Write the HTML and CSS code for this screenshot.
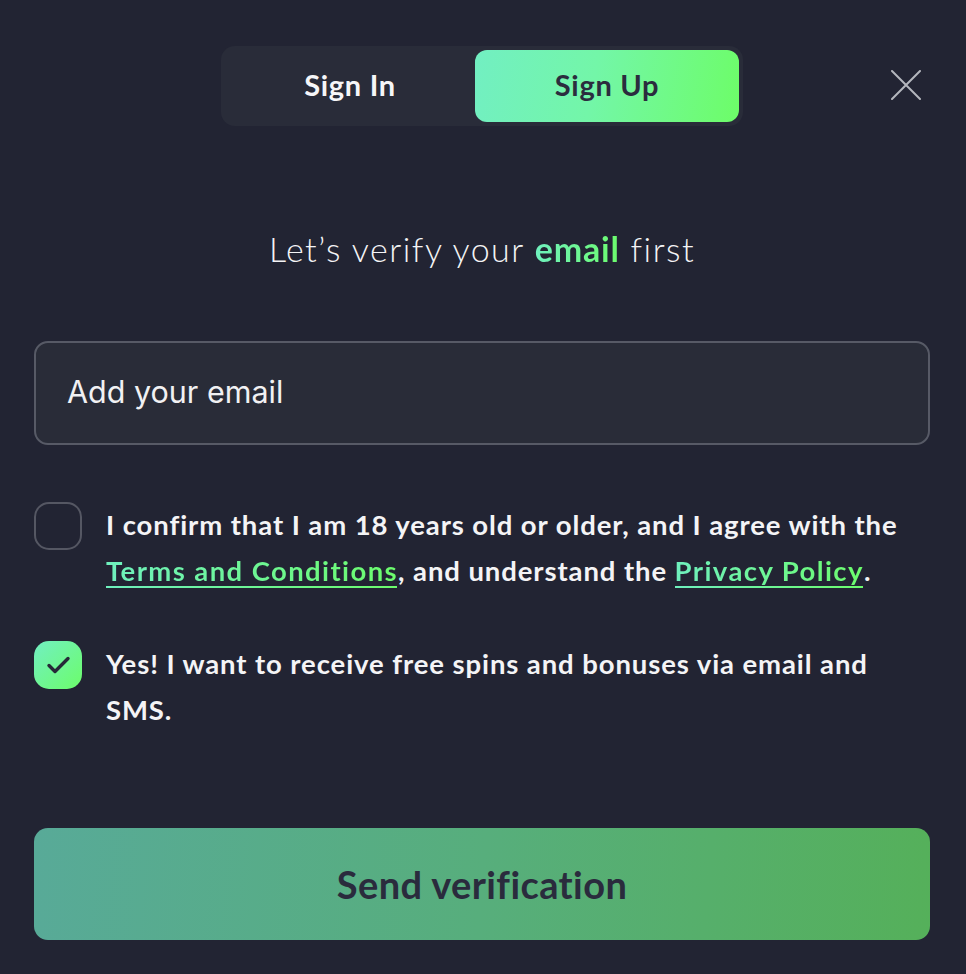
FILE: index.html
```html
<!DOCTYPE html>
<html lang="en">
<head>
<meta charset="utf-8">
<title>Sign Up</title>
<link rel="stylesheet" href="styles.css">
</head>
<body>
<main class="modal">
  <header class="header">
    <div class="tabs">
      <button class="tab tab-in">Sign In</button>
      <button class="tab tab-up">Sign Up</button>
    </div>
    <button class="close" aria-label="Close">
      <svg width="30" height="30" viewBox="0 0 30 30" fill="none" stroke="#b4b6bd" stroke-width="2" stroke-linecap="round"><path d="M1 1L29 29M29 1L1 29"/></svg>
    </button>
  </header>

  <h1 class="title">Let’s verify your <strong class="accent">email</strong> first</h1>

  <div class="field">
    <span class="placeholder">Add your email</span>
  </div>

  <div class="checks">
    <label class="check-row">
      <span class="box"></span>
      <span class="check-text">I confirm that I am 18 years old or older, and I agree with the <a class="link" href="#">Terms and Conditions</a>, and understand the <a class="link" href="#">Privacy Policy</a>.</span>
    </label>
    <label class="check-row">
      <span class="box box-on">
        <svg width="25" height="18" viewBox="0 0 25 18" fill="none" stroke="#262838" stroke-width="3.4" stroke-linecap="round" stroke-linejoin="round"><path d="M3 9.5L9 15.5L22 2.5"/></svg>
      </span>
      <span class="check-text">Yes! I want to receive free spins and bonuses via email and SMS.</span>
    </label>
  </div>

  <button class="submit">Send verification</button>
</main>
</body>
</html>
```

FILE: styles.css
```css
* { box-sizing: border-box; }
html, body { margin: 0; padding: 0; }
body {
  background: #222433;
  color: #f4f4f6;
  font-family: Lato, "Open Sans", sans-serif;
  width: 966px;
  height: 974px;
  overflow: hidden;
}
.modal {
  padding: 46px 36px 0 34px;
}
.header {
  display: grid;
  grid-template-columns: 1fr auto 1fr;
  align-items: center;
}
.tabs {
  grid-column: 2;
  display: flex;
  width: 522px;
  height: 80px;
  padding: 4px;
  background: #292c39;
  border-radius: 14px;
}
.tab {
  border: 0;
  background: transparent;
  font-family: Lato, sans-serif;
  font-weight: 700;
  font-size: 29px;
  letter-spacing: 0.7px;
  color: #f6f6f8;
  border-radius: 12px;
  cursor: pointer;
  padding: 0 0 3px;
}
.tab-in { width: 250px; }
.tab-up {
  width: 264px;
  color: #2b2c3e;
  background: linear-gradient(100deg, #72efc2 0%, #73f6a8 45%, #6dfd68 100%);
}
.close {
  grid-column: 3;
  justify-self: end;
  margin-right: 9px;
  margin-top: -2px;
  width: 30px;
  height: 30px;
  padding: 0;
  border: 0;
  background: transparent;
  display: flex;
}
.title {
  margin: 98px 0 0;
  text-align: center;
  font-weight: 300;
  font-size: 34px;
  letter-spacing: 1.5px;
  line-height: 50px;
  color: #f4f4f6;
}
.accent {
  font-weight: 700;
  letter-spacing: 0.8px;
  background: linear-gradient(90deg, #6ff0be, #6cfc6c);
  -webkit-background-clip: text;
  background-clip: text;
  color: transparent;
}
.field {
  margin-top: 67px;
  height: 104px;
  border: 2px solid #575a66;
  border-radius: 14px;
  background: #292c38;
  display: flex;
  align-items: center;
  padding-left: 31px;
}
.placeholder {
  font-family: Inter, "Open Sans", sans-serif;
  font-size: 30.5px;
  color: #f1f1f3;
  margin-top: -4px;
}
.checks {
  margin-top: 57px;
  display: flex;
  flex-direction: column;
  gap: 47px;
}
.check-row {
  display: flex;
  gap: 24px;
  align-items: flex-start;
}
.box {
  flex: 0 0 48px;
  width: 48px;
  height: 48px;
  border: 2px solid #555763;
  border-radius: 15px;
  display: flex;
  align-items: center;
  justify-content: center;
}
.box-on {
  border: 0;
  background: linear-gradient(135deg, #72efc2, #6cfd6a);
}
.check-text {
  font-weight: 700;
  font-size: 27.5px;
  letter-spacing: 0.9px;
  line-height: 46px;
  color: #f4f4f6;
}
.link {
  white-space: nowrap;
  letter-spacing: 1.4px;
  color: transparent;
  background: linear-gradient(90deg, #6ff0be, #6cfc6c);
  -webkit-background-clip: text;
  background-clip: text;
  text-decoration: none;
  position: relative;
}
.link::after {
  content: "";
  position: absolute;
  left: 0;
  right: 1px;
  bottom: -1px;
  height: 2px;
  background: linear-gradient(90deg, #6ff0be, #6cfc6c);
}
.submit {
  display: block;
  width: 100%;
  margin-top: 95px;
  height: 112px;
  border: 0;
  border-radius: 14px;
  background: linear-gradient(95deg, #58aa98 0%, #57ae7c 50%, #55b05a 100%);
  font-family: Lato, sans-serif;
  font-weight: 700;
  font-size: 38px;
  letter-spacing: 0.4px;
  color: #2a2b3d;
  cursor: pointer;
  padding-bottom: 2px;
}
```
